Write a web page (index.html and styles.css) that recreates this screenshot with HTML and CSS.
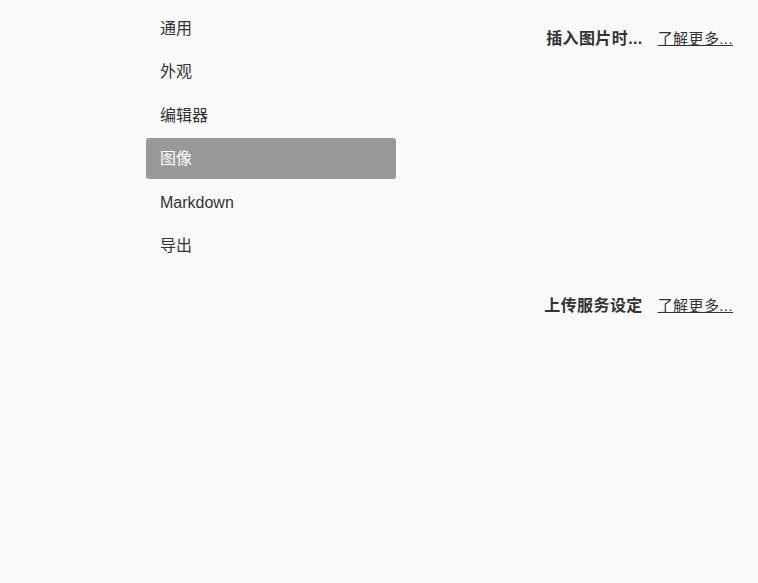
FILE: index.html
```html
<!DOCTYPE html>
<html lang="zh">
<head>
<meta charset="utf-8">
<link rel="stylesheet" href="styles.css">
</head>
<body>
<div class="page">
  <nav class="sidebar">
    <div class="item">通用</div>
    <div class="item">外观</div>
    <div class="item">编辑器</div>
    <div class="item active">图像</div>
    <div class="item">Markdown</div>
    <div class="item">导出</div>
  </nav>
  <main class="content">
    <section class="section first">
      <div class="head">
        <h3 class="title">插入图片时...</h3>
        <a class="more">了解更多...</a>
      </div>
    </section>
    <section class="section second">
      <div class="head">
        <h3 class="title">上传服务设定</h3>
        <a class="more">了解更多...</a>
      </div>
    </section>
  </main>
</div>
</body>
</html>
```
FILE: styles.css
```css
html, body {
  margin: 0;
  padding: 0;
  background: #fafafa;
  color: #333;
  font-family: "Liberation Sans", "Noto Sans CJK SC", sans-serif;
}
.page {
  display: flex;
  width: 758px;
  height: 583px;
}
.sidebar {
  padding-left: 146px;
  padding-top: 8px;
  width: 250px;
  flex: none;
  display: flex;
  flex-direction: column;
  gap: 2.4px;
}
.item {
  height: 41px;
  line-height: 41px;
  padding-left: 14px;
  font-size: 16px;
  color: #333;
  border-radius: 3px;
}
.item.active {
  background: #999;
  color: #fff;
}
.content {
  flex: 1;
  padding-right: 25px;
  display: flex;
  flex-direction: column;
}
.head {
  display: flex;
  justify-content: flex-end;
  align-items: baseline;
  gap: 15px;
}
.title {
  margin: 0;
  font-size: 16px;
  font-weight: bold;
  line-height: 20px;
  letter-spacing: 0.4px;
}
.more {
  font-size: 15px;
  color: #333;
  text-decoration: underline;
  line-height: 20px;
  letter-spacing: 0.4px;
}
.first {
  margin-top: 29px;
}
.second {
  margin-top: 247px;
}
```
